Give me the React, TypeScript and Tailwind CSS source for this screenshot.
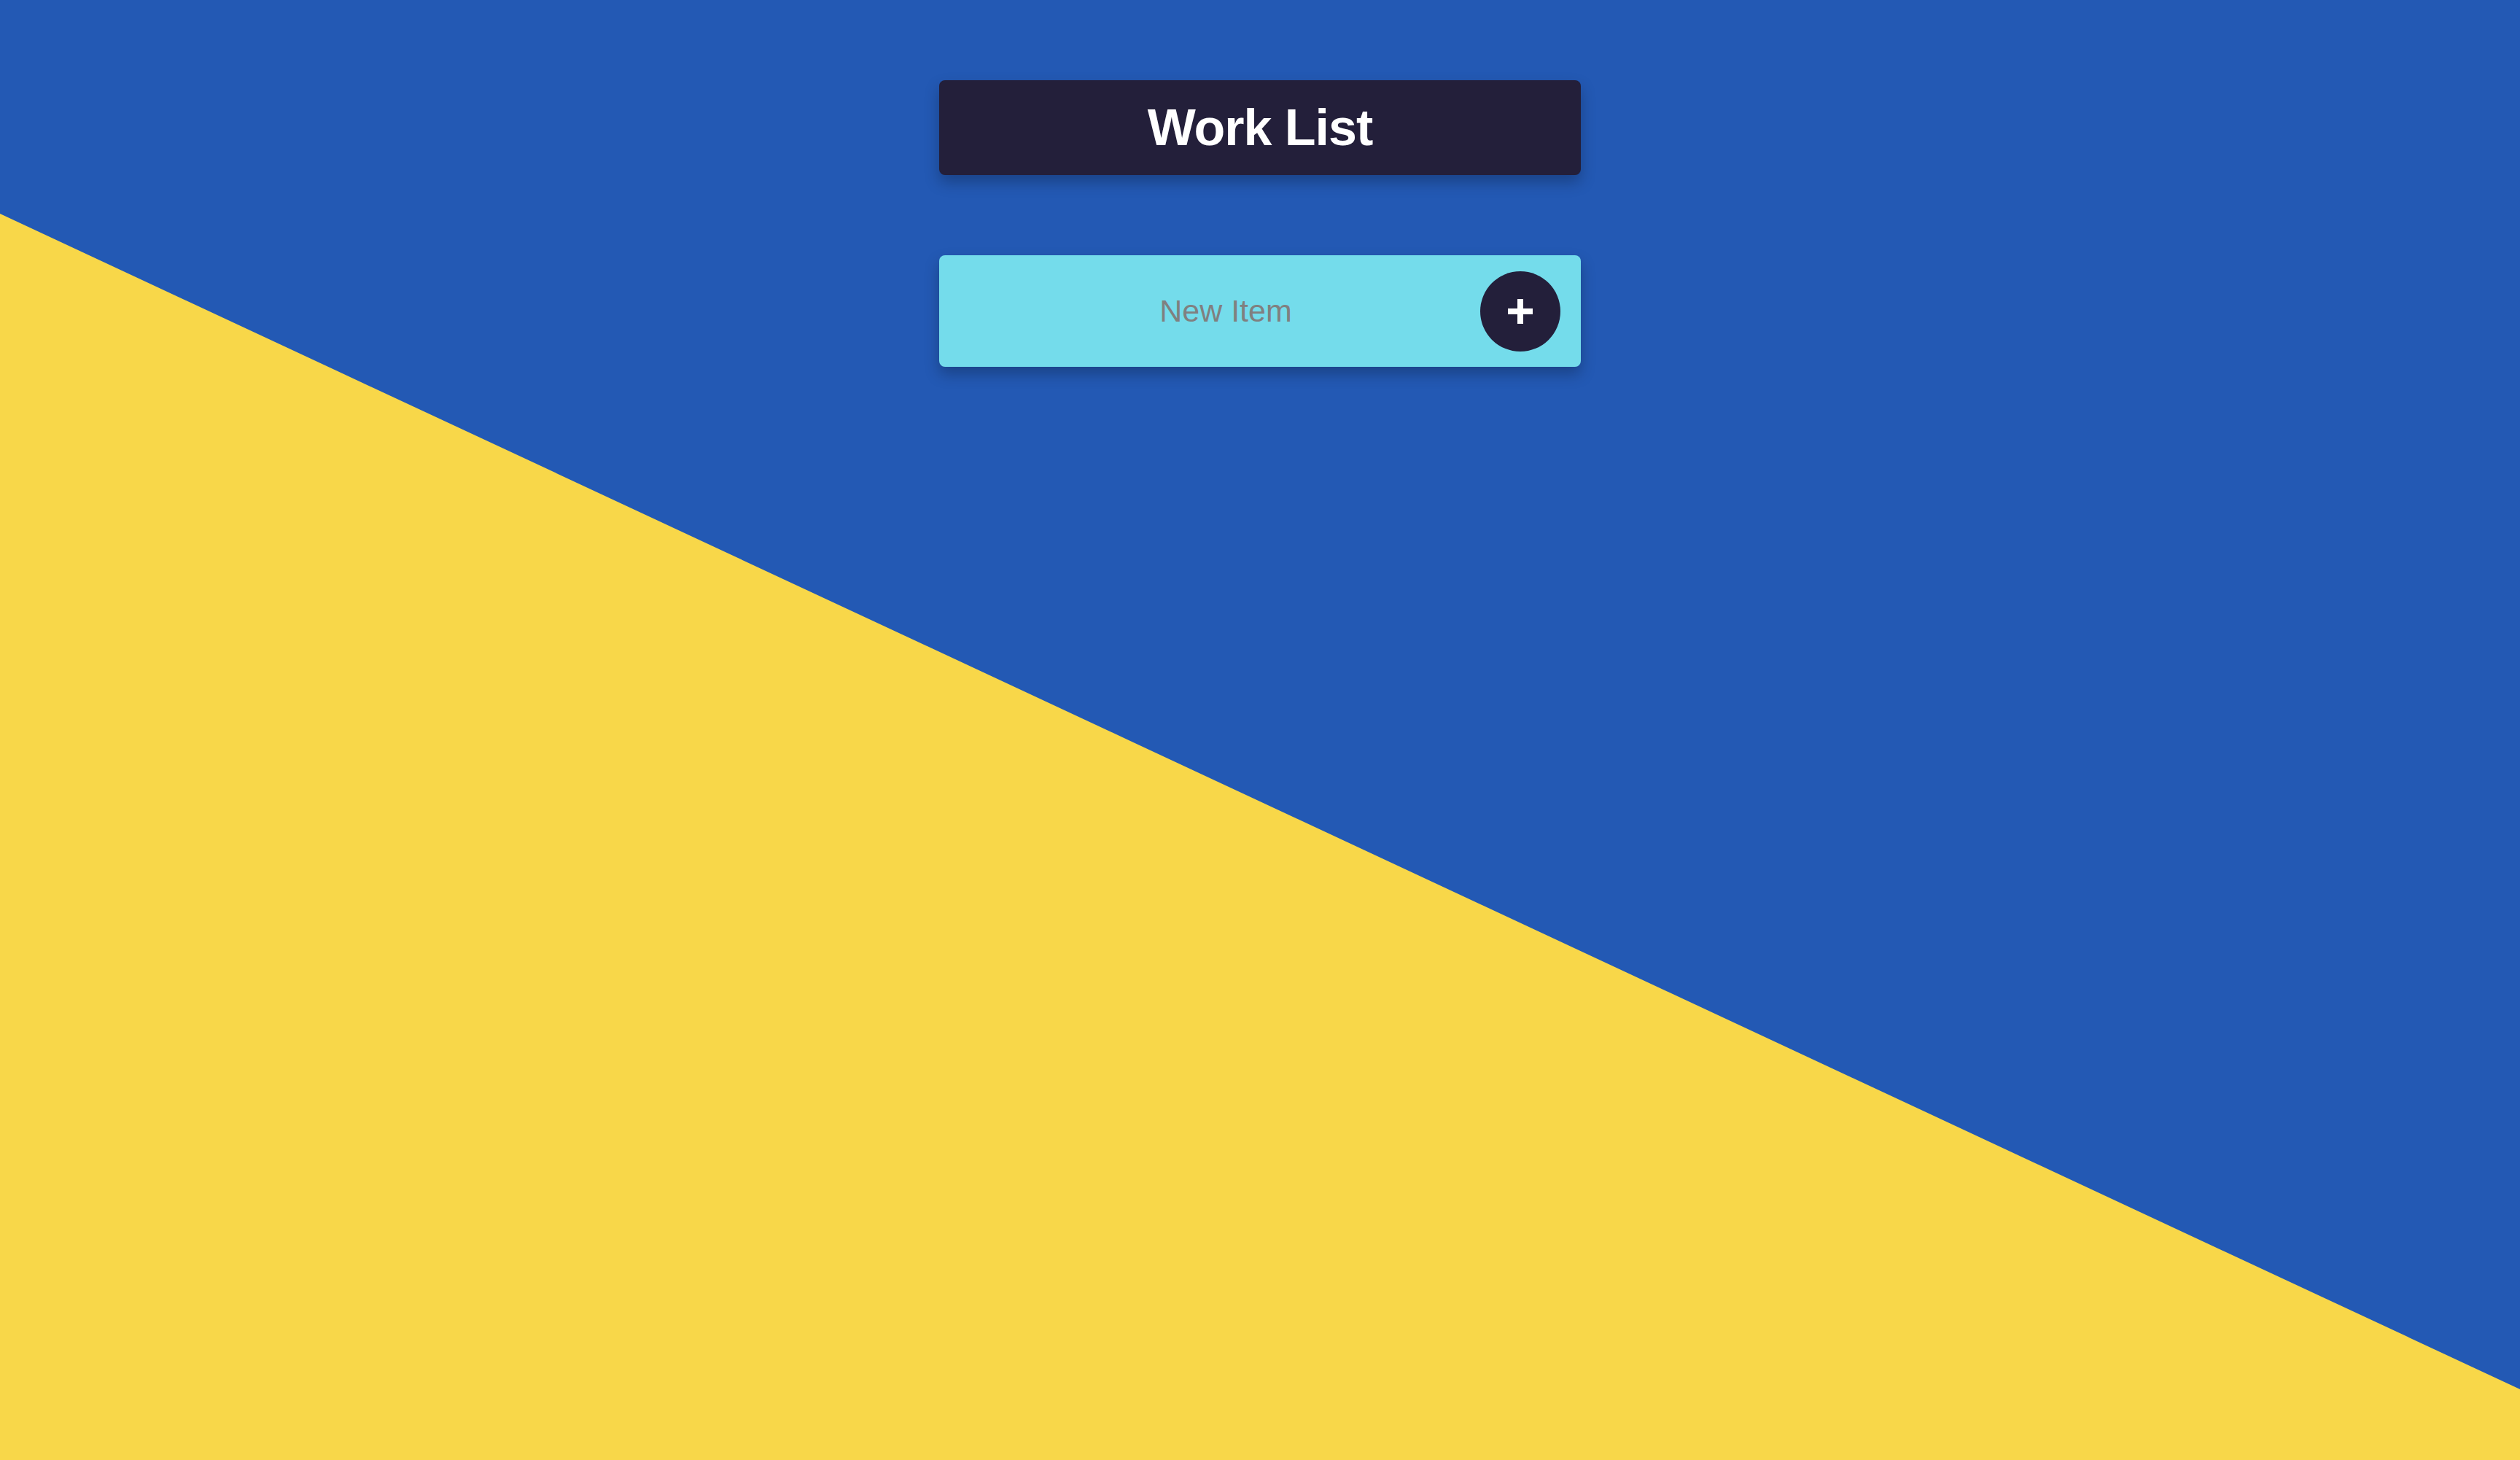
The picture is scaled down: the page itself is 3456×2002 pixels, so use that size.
import React from "react";

export default function App() {
  return (
    <div className="relative w-full h-screen min-h-[2002px] overflow-hidden bg-[#2359b4]" style={{ fontFamily: '"Liberation Sans", Arial, sans-serif' }}>
      <svg className="absolute inset-0 w-full h-full" viewBox="0 0 3456 2002" preserveAspectRatio="none">
        <polygon points="0,293 3456,1905 3456,2002 0,2002" fill="#f8d749" />
      </svg>
      <div className="relative flex flex-col items-center pt-[110px] gap-[110px]">
        <div className="w-[880px] h-[130px] rounded-[8px] bg-[#231f3a] flex items-center justify-center shadow-[0_10px_20px_rgba(0,0,0,0.25)]">
          <h1 className="text-white font-bold text-[70px] leading-none tracking-[-1px]">Work List</h1>
        </div>
        <div className="w-[880px] h-[153px] rounded-[8px] bg-[#74dceb] flex items-center pr-[28px] shadow-[0_10px_20px_rgba(0,0,0,0.25)]">
          <input
            className="flex-1 min-w-0 bg-transparent outline-none text-center text-[43px] text-[#808080] placeholder-[#808080] pl-[44px]"
            placeholder="New Item"
          />
          <button className="w-[110px] h-[110px] rounded-full bg-[#231f3a] flex items-center justify-center shrink-0">
            <svg width="34" height="34" viewBox="0 0 34 34">
              <rect x="13" y="0" width="8" height="34" fill="white" />
              <rect x="0" y="13" width="34" height="8" fill="white" />
            </svg>
          </button>
        </div>
      </div>
    </div>
  );
}
